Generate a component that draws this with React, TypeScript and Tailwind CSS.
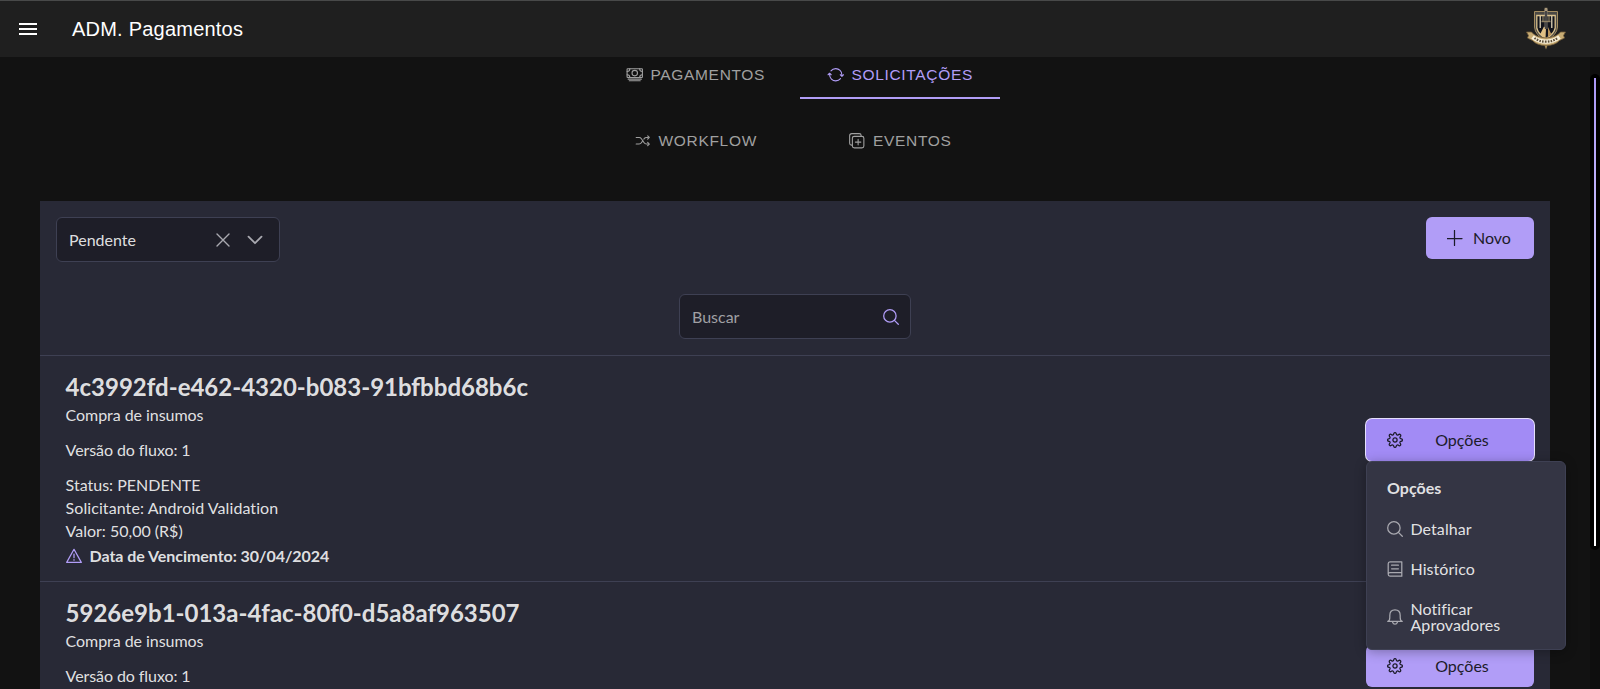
import type { ReactNode } from "react";
import {
  IoCashOutline,
  IoDuplicateOutline,
  IoShuffleOutline,
  IoSyncOutline,
} from "react-icons/io5";

type IconProps = { className?: string; children?: ReactNode };

function Icon({ className = "", children }: IconProps) {
  return (
    <svg
      viewBox="0 0 16 16"
      fill="none"
      stroke="currentColor"
      strokeWidth="1.25"
      strokeLinecap="round"
      strokeLinejoin="round"
      className={"size-4 shrink-0 " + className}
    >
      {children}
    </svg>
  );
}

const SearchIcon = ({ className }: IconProps) => (
  <Icon className={className}>
    <circle cx="6.9" cy="6.9" r="6.2" />
    <path d="M11.400 11.400L15.300 15.300" />
  </Icon>
);

const GearIcon = ({ className }: IconProps) => (
  <Icon className={className}>
    <path d="M6.6 2.2Q6.7.6 8 .6T9.4 2.2Q9.9 3.5 11.1 2.9Q12.5 1.8 13.4 2.6T13.1 4.9Q12.5 6.2 13.8 6.6Q15.4 6.7 15.4 8T13.8 9.4Q12.5 9.8 13.1 11.1Q14.2 12.5 13.4 13.4T11.1 13.1Q9.9 12.5 9.4 13.8Q9.3 15.4 8 15.4T6.6 13.8Q6.1 12.5 4.9 13.1Q3.5 14.2 2.6 13.4T2.9 11.1Q3.5 9.8 2.2 9.4Q.6 9.3.6 8T2.2 6.6Q3.5 6.2 2.9 4.9Q1.8 3.5 2.6 2.6T4.9 2.9Q6.1 3.5 6.6 2.2Z" />
    <circle cx="8" cy="8" r="2.1" />
  </Icon>
);

const BookIcon = ({ className }: IconProps) => (
  <Icon className={className}>
    <path d="M14.800.8H3A1.900 1.900 0 0 0 1.200 2.700V13.300A1.900 1.900 0 0 0 3 15.200H14.800ZM14.800 11.500H3A1.800 1.800 0 0 0 1.200 13.300M4.600 4.200H11.400M4.600 7.800H11.400" />
  </Icon>
);

const BellIcon = ({ className }: IconProps) => (
  <Icon className={className}>
    <path d="M.8 12.400H15.200Q13.200 11.600 13.200 8.400V6.500Q13.200.8 8 .8T2.800 6.500V8.400Q2.800 11.600.8 12.400M5.600 13.200Q6.200 15.200 8 15.200T10.400 13.200" />
  </Icon>
);

const WarningIcon = ({ className }: IconProps) => (
  <Icon className={className}>
    <path d="M8 1.300L15.300 14.400H.7ZM8 6V9.700M8 11.700V12.200" />
  </Icon>
);

function Crest() {
  return (
    <svg viewBox="0 0 40 44" className="h-11 w-10">
      <path d="M8.500 4.500H31.500V20Q31 28 20 34Q9 28 8.500 20Z" fill="#4a4844" stroke="#a38c60" strokeWidth="1" />
      <path d="M10.800 8.500H29.200V21Q28 27 20 31.500Q12 27 10.800 21Z" fill="#12141c" stroke="#d9c08c" strokeWidth="1.300" />
      <path d="M14.200 9V21M25.800 9V21" stroke="#f1e3c2" strokeWidth="1.200" />
      <path d="M17 9V14M23 9V14" stroke="#c9b68c" strokeWidth=".8" />
      <path d="M18 19.500L14 27.500L19.500 31.500L20 21Z" fill="#e0c084" />
      <path d="M22 20L25.500 27.500L22 30Z" fill="#b8935a" />
      <path d="M20 2V22" stroke="#8d8778" strokeWidth="2.800" />
      <path d="M20 3V22" stroke="#22242b" strokeWidth="1.300" />
      <path d="M20 .8V4" stroke="#aa987a" strokeWidth="2.800" />
      <path d="M15.500 14.500H24.500" stroke="#8f8164" strokeWidth="1.400" />
      <path d="M.5 25H5.500Q9 30 20 31Q31 30 34.500 25H39.500L37.500 28.500L38.500 31L33.500 33.500Q29 38.500 20 38.500T6.500 33.500L1.500 31L2.500 28.500Z" fill="#c8ac74" stroke="#725c38" strokeWidth=".8" />
      <path d="M6.500 30Q13 34.700 20 34.700T33.500 30" fill="none" stroke="#f8efd8" strokeWidth="4.200" />
      <path d="M8.500 31Q13 34.700 20 34.700T31.500 31" fill="none" stroke="#5c4e38" strokeWidth="2.200" strokeDasharray="1.600 1.200" />
      <path d="M18.500 38.500H21.500L20 42.500Z" fill="#a68b58" />
    </svg>
  );
}

type TabProps = { icon: ReactNode; label: string; active?: boolean; className?: string };

function Tab({ icon, label, active = false, className = "" }: TabProps) {
  return (
    <button
      className={
        "flex h-[49px] w-[200px] items-center justify-center gap-[7px] border-b-2 pt-[2px] text-[15.5px] tracking-[0.68px] " +
        (active ? "border-[#b19df7] text-[#b19df7] " : "border-transparent text-[#a0a0a0] ") +
        className
      }
    >
      <span className="text-[17.5px]">{icon}</span>
      <span>{label}</span>
    </button>
  );
}

function MenuItem({ icon, children }: { icon: ReactNode; children: ReactNode }) {
  return (
    <li className="flex items-center gap-2 px-[19.5px] py-3 leading-4">
      <span className="text-[#a9a9b0]">{icon}</span>
      <span className="tracking-[0.06px]">{children}</span>
    </li>
  );
}

function OptionsMenu() {
  return (
    <ul className="absolute top-full left-0 z-10 h-[189px] w-[200px] rounded-md border border-[#3e4053] bg-[#343544] py-1 text-white/87 shadow-[0_2px_12px_rgba(0,0,0,0.3)]">
      <li className="px-5 pt-[14px] pb-[13px] leading-4 font-bold">Opções</li>
      <MenuItem icon={<SearchIcon />}>Detalhar</MenuItem>
      <MenuItem icon={<BookIcon />}>Histórico</MenuItem>
      <MenuItem icon={<BellIcon />}>
        Notificar
        <br />
        Aprovadores
      </MenuItem>
    </ul>
  );
}

function Request({ id, open = false }: { id: string; open?: boolean }) {
  return (
    <article className="flex h-[226px] items-start justify-between border-t border-[#3e4053] pr-4 pl-[25.6px]">
      <div className="pt-[14px] leading-[23px]">
        <h2 className="text-2xl leading-[33px] font-bold">{id}</h2>
        <p className="tracking-[-0.05px]">Compra de insumos</p>
        <p className="mt-3 tracking-[-0.08px]">Versão do fluxo: 1</p>
        <p className="mt-3">Status: PENDENTE</p>
        <p className="tracking-[0.08px]">Solicitante: Android Validation</p>
        <p>Valor: 50,00 (R$)</p>
        <p className="mt-[2px] flex items-center gap-2 font-bold tracking-[-0.05px]">
          <WarningIcon className="text-[#b19df7]" />
          Data de Vencimento: 30/04/2024
        </p>
      </div>
      <div className="relative mt-[63px]">
        <button
          className={
            "flex h-[42px] w-[168px] items-center rounded-md pr-5 pl-[21px] text-[#1c1b29] " +
            (open ? "bg-[#a28bf5] shadow-[0_0_0_1px_#e5dffc]" : "bg-[#b19df7]")
          }
        >
          <GearIcon />
          <span className="flex-1 pl-[7px] text-center">Opções</span>
        </button>
        {open && <OptionsMenu />}
      </div>
    </article>
  );
}

export default function App() {
  return (
    <div className="flex h-[689px] w-[1600px] flex-col overflow-hidden bg-[#121212] font-['Lato',sans-serif] text-base text-white/87">
      <header className="relative z-20 flex h-[57px] shrink-0 items-center border-t border-[#484949] bg-[#1f1f1f] pr-[34px] pl-4 font-['Liberation_Sans',sans-serif] text-white">
        <svg viewBox="0 0 24 24" className="size-6" fill="currentColor">
          <path d="M3 18h18v-2H3v2zm0-5h18v-2H3v2zm0-7v2h18V6H3z" />
        </svg>
        <h1 className="ml-8 flex-1 text-xl tracking-[0.22px]">ADM. Pagamentos</h1>
        <Crest />
      </header>

      <div className="flex min-h-0 flex-1">
        <main className="min-w-0 flex-1 pl-10">
          <nav className="-mt-[7px] ml-[560px] grid w-[400px] grid-cols-2 gap-y-[17px] font-['Liberation_Sans',sans-serif]">
            <Tab icon={<IoCashOutline />} label="PAGAMENTOS" className="pr-[9px]" />
            <Tab icon={<IoSyncOutline />} label="SOLICITAÇÕES" active />
            <Tab icon={<IoShuffleOutline />} label="WORKFLOW" className="pr-[9px]" />
            <Tab icon={<IoDuplicateOutline />} label="EVENTOS" />
          </nav>

          <section className="mt-9 w-[1510px] bg-[#282936]">
            <div className="flex h-[154px] flex-col px-4 pt-4">
              <div className="flex items-start justify-between">
                <div className="flex h-[45px] w-[224px] items-center rounded-md border border-[#3e4053] bg-[#1e1e28] pr-4 pl-3">
                  <span className="flex-1">Pendente</span>
                  <Icon className="mr-4 text-[#a9a9b0]">
                    <path d="M2 2L14 14M14 2L2 14" strokeWidth="1.400" />
                  </Icon>
                  <Icon className="text-[#a9a9b0]">
                    <path d="M1.500 4.700L8 11.200L14.500 4.700" strokeWidth="1.800" />
                  </Icon>
                </div>
                <button className="flex h-[42px] w-[108px] items-center gap-[10px] rounded-md bg-[#b19df7] pl-[21px] text-[#1c1b29]">
                  <Icon>
                    <path d="M7.500.5V15.500M0 8.500H15" />
                  </Icon>
                  Novo
                </button>
              </div>
              <div className="mx-auto mt-8 flex h-[45px] w-[232px] items-center justify-between rounded-md border border-[#3e4053] bg-[#1e1e28] pr-[11px] pl-3 text-[#a0a0a4]">
                <span>Buscar</span>
                <SearchIcon className="text-[#b19df7]" />
              </div>
            </div>
            <Request id="4c3992fd-e462-4320-b083-91bfbbd68b6c" open />
            <Request id="5926e9b1-013a-4fac-80f0-d5a8af963507" />
          </section>
        </main>

        <div className="w-[10px] bg-[#0e0e0e] pt-[17px]">
          <div className="h-[476px] rounded-[5px] bg-black px-1 py-1">
            <div className="h-full w-[2px] bg-linear-to-b from-[#a996f5] to-white" />
          </div>
        </div>
      </div>
    </div>
  );
}
